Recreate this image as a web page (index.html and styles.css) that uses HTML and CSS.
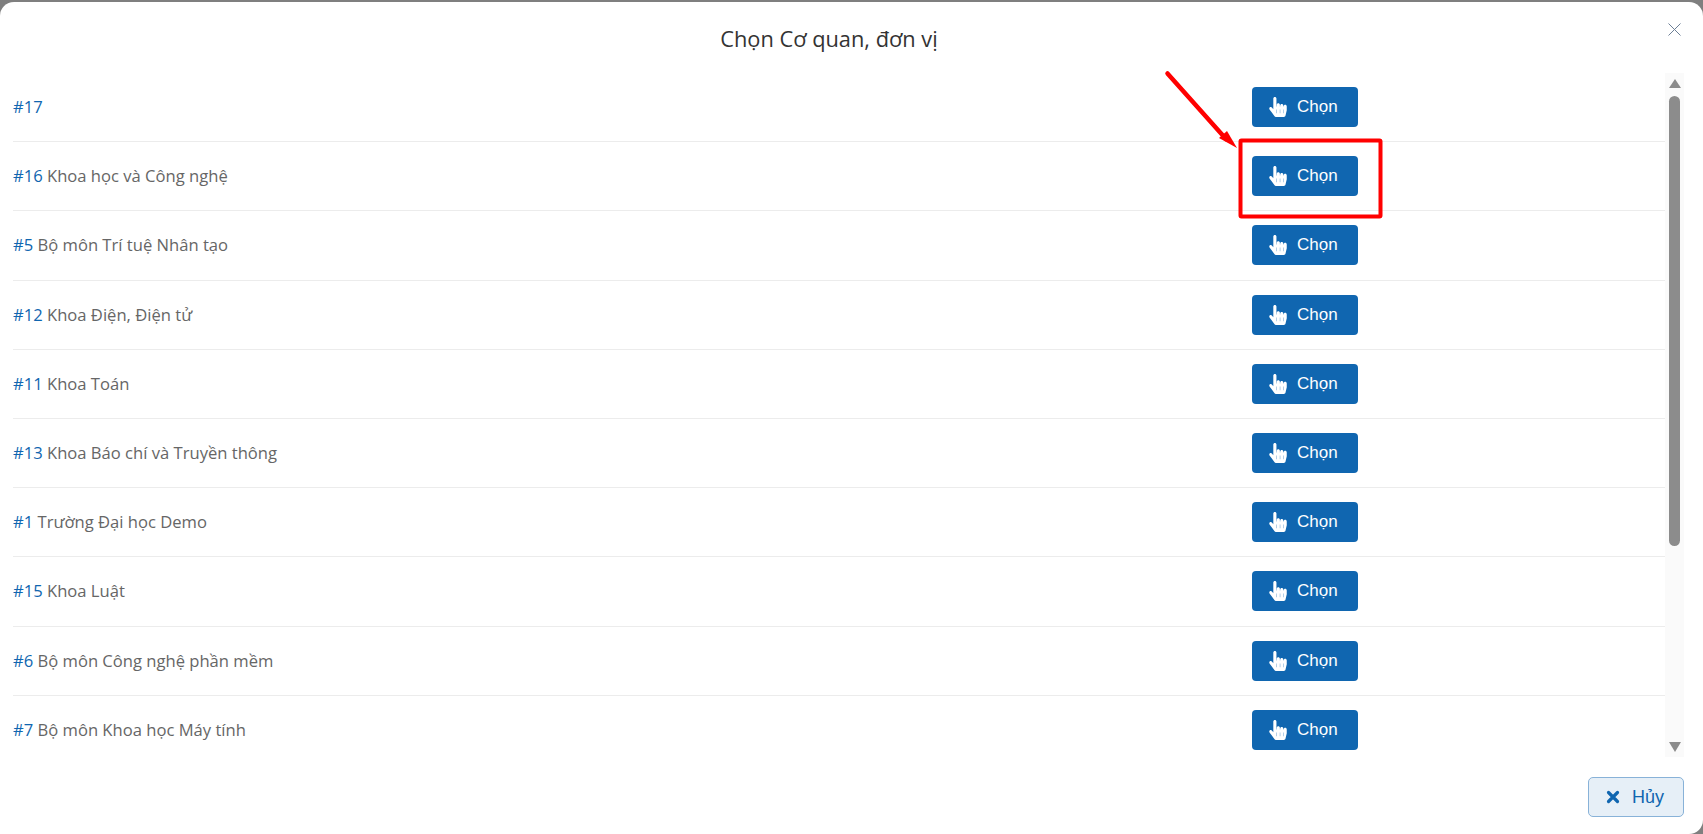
FILE: index.html
```html
<!DOCTYPE html>
<html lang="vi">
<head>
  <meta charset="UTF-8" />
  <meta name="viewport" content="width=device-width, initial-scale=1.0" />
  <title>Chọn Cơ quan, đơn vị</title>
  <link rel="stylesheet" href="styles.css">
</head>
<body>
  <svg class="icon-defs" width="0" height="0">
    <symbol id="hand" viewBox="0 0 448 512">
      <path fill="#fff" d="M448 240v96c0 3.084-.356 6.159-1.063 9.162l-32 136C410.686 499.23 394.562 512 376 512H168a40.004 40.004 0 0 1-32.35-16.473l-127.997-176c-12.993-17.866-9.043-42.883 8.822-55.876 17.867-12.994 42.884-9.043 55.877 8.823L104 315.992V40c0-22.091 17.908-40 40-40s40 17.909 40 40v200h8v-40c0-22.091 17.908-40 40-40s40 17.909 40 40v40h8v-24c0-22.091 17.908-40 40-40s40 17.909 40 40v24h8c0-22.091 17.908-40 40-40s40 17.909 40 40zm-256 80h-8v96h8v-96zm88 0h-8v96h8v-96zm88 0h-8v96h8v-96z"/>
    </symbol>
  </svg>

  <div class="modal">
    <header class="modal-head">
      <h2>Chọn Cơ quan, đơn vị</h2>
      <svg class="close" width="13" height="13" viewBox="0 0 13 13"><path d="M.5.5l12 12M12.500.5l-12 12" stroke="#6c7f96" stroke-width="1" fill="none"/></svg>
    </header>

    <div class="modal-body">
      <div class="list">
        <div class="row"><span class="name"><a>#17</a></span><button class="pick"><svg width="18" height="20"><use href="#hand"/></svg>Chọn</button></div>
        <div class="row"><span class="name"><a>#16</a> Khoa học và Công nghệ</span><button class="pick"><svg width="18" height="20"><use href="#hand"/></svg>Chọn</button></div>
        <div class="row"><span class="name"><a>#5</a> Bộ môn Trí tuệ Nhân tạo</span><button class="pick"><svg width="18" height="20"><use href="#hand"/></svg>Chọn</button></div>
        <div class="row"><span class="name"><a>#12</a> Khoa Điện, Điện tử</span><button class="pick"><svg width="18" height="20"><use href="#hand"/></svg>Chọn</button></div>
        <div class="row"><span class="name"><a>#11</a> Khoa Toán</span><button class="pick"><svg width="18" height="20"><use href="#hand"/></svg>Chọn</button></div>
        <div class="row"><span class="name"><a>#13</a> Khoa Báo chí và Truyền thông</span><button class="pick"><svg width="18" height="20"><use href="#hand"/></svg>Chọn</button></div>
        <div class="row"><span class="name"><a>#1</a> Trường Đại học Demo</span><button class="pick"><svg width="18" height="20"><use href="#hand"/></svg>Chọn</button></div>
        <div class="row"><span class="name"><a>#15</a> Khoa Luật</span><button class="pick"><svg width="18" height="20"><use href="#hand"/></svg>Chọn</button></div>
        <div class="row"><span class="name"><a>#6</a> Bộ môn Công nghệ phần mềm</span><button class="pick"><svg width="18" height="20"><use href="#hand"/></svg>Chọn</button></div>
        <div class="row"><span class="name"><a>#7</a> Bộ môn Khoa học Máy tính</span><button class="pick"><svg width="18" height="20"><use href="#hand"/></svg>Chọn</button></div>
      </div>
      <div class="scrollbar">
        <span class="arrow-up"></span>
        <div class="track"><div class="thumb"></div></div>
        <span class="arrow-down"></span>
      </div>
    </div>

    <footer class="modal-foot">
      <button class="cancel">
        <svg width="14" height="14" viewBox="0 0 14 14"><path d="M2.500 2.500l9 9M11.500 2.500l-9 9" stroke="#1066b0" stroke-width="3.200" stroke-linecap="round" fill="none"/></svg>
        Hủy
      </button>
    </footer>
  </div>

  <!-- red marks drawn over the screenshot -->
  <svg class="marks" width="1703" height="834" viewBox="0 0 1703 834">
    <rect x="1240.500" y="140.500" width="140" height="76" rx="1" fill="none" stroke="#f00" stroke-width="4"/>
    <path d="M1167.500 73.500L1226 139" stroke="#f00" stroke-width="4.500" stroke-linecap="round" fill="none"/>
    <path d="M1237 148L1219 138L1227 131Z" fill="#f00"/>
  </svg>
</body>
</html>
```

FILE: styles.css
```css
html, body {
  height: 100%;
}
body {
  margin: 0;
  padding-top: 2px;
  box-sizing: border-box;
  background-color: #7f7f7f;
  font-family: "Open Sans", "Noto Sans", sans-serif;
  overflow: hidden;
}
.icon-defs {
  display: none;
}
.marks {
  position: absolute;
  top: 0;
  left: 0;
  pointer-events: none;
}
.modal {
  height: 100%;
  background: #fff;
  border-radius: 14px 14px 14px 0;
  display: flex;
  flex-direction: column;
}
.modal-head {
  height: 71px;
  display: flex;
  align-items: center;
  justify-content: center;
  position: relative;
  flex: none;
  padding-right: 45px;
  box-sizing: border-box;
}
.modal-head h2 {
  margin: 1px 0 0;
  font-size: 21.800px;
  font-weight: 400;
  color: #333;
}
.close {
  position: absolute;
  top: 21px;
  right: 22px;
}
.modal-body {
  display: flex;
  height: 684px;
  flex: none;
  padding-left: 13px;
  padding-right: 19px;
}
.list {
  flex: 1;
  overflow: hidden;
}
.row {
  display: flex;
  align-items: center;
  height: 69.2px;
  box-sizing: border-box;
  border-bottom: 1px solid #ececec;
}
.name {
  width: 1239px;
  margin-bottom: 1px;
  font-size: 16.600px;
  color: #666;
}
.name a {
  color: #1066b0;
}
.pick {
  width: 106px;
  height: 40px;
  display: flex;
  align-items: center;
  gap: 10px;
  border: none;
  border-radius: 4px;
  background-color: #1066b0;
  color: #fff;
  font-family: "Liberation Sans", Arial, sans-serif;
  font-size: 17px;
  padding: 0 0 0 17px;
}
.scrollbar {
  width: 19px;
  background: #fafafa;
  display: flex;
  flex-direction: column;
  align-items: center;
}
.track {
  flex: 1;
  width: 11px;
  padding-top: 8px;
}
.thumb {
  height: 450px;
  background: #8c8c8c;
  border-radius: 5.500px;
}
.arrow-up, .arrow-down {
  width: 0;
  height: 0;
  border-left: 6.500px solid transparent;
  border-right: 6.500px solid transparent;
}
.arrow-up {
  margin-top: 6px;
  border-bottom: 9px solid #8c8c8c;
}
.arrow-down {
  margin-bottom: 5px;
  border-top: 10px solid #8c8c8c;
}
.modal-foot {
  flex: 1;
  display: flex;
  justify-content: flex-end;
  padding: 20px 19px 0 0;
}
.cancel {
  width: 96px;
  height: 40px;
  display: flex;
  align-items: center;
  gap: 12px;
  background: #e6eff7;
  border: 1px solid #88b2d8;
  border-radius: 5px;
  color: #1066b0;
  font-family: "Liberation Sans", Arial, sans-serif;
  font-size: 18px;
  padding: 0 0 0 17px;
}
```
